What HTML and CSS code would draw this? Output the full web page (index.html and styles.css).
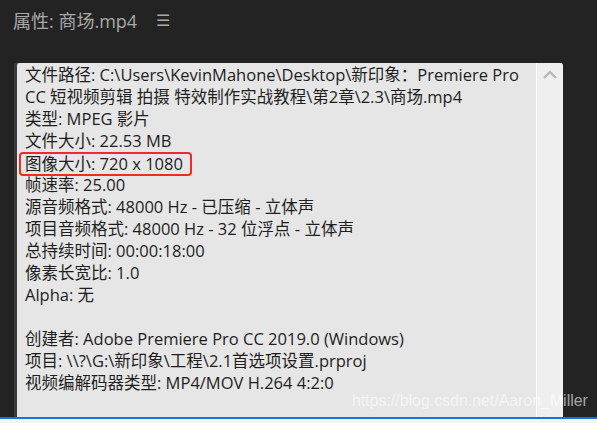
FILE: index.html
```html
<!DOCTYPE html>
<html lang="zh">
<head>
<meta charset="utf-8">
<link rel="stylesheet" href="styles.css">
</head>
<body>
<div class="page">
  <header class="header">
    <span class="title">属性: 商场.mp4</span>
    <span class="menu">☰</span>
  </header>
  <div class="main">
    <div class="gutter"></div>
    <div class="panel">
      <div class="content">
        <div class="line">文件路径: C:\Users\KevinMahone\Desktop\新印象：Premiere Pro</div>
        <div class="line">CC 短视频剪辑 拍摄 特效制作实战教程\第2章\2.3\商场.mp4</div>
        <div class="line">类型: MPEG 影片</div>
        <div class="line">文件大小: 22.53 MB</div>
        <div class="line"><span class="highlight">图像大小: 720 x 1080</span></div>
        <div class="line">帧速率: 25.00</div>
        <div class="line">源音频格式: 48000 Hz - 已压缩 - 立体声</div>
        <div class="line">项目音频格式: 48000 Hz - 32 位浮点 - 立体声</div>
        <div class="line">总持续时间: 00:00:18:00</div>
        <div class="line">像素长宽比: 1.0</div>
        <div class="line">Alpha: 无</div>
        <div class="line"></div>
        <div class="line">创建者: Adobe Premiere Pro CC 2019.0 (Windows)</div>
        <div class="line">项目: \\?\G:\新印象\工程\2.1首选项设置.prproj</div>
        <div class="line">视频编解码器类型: MP4/MOV H.264 4:2:0</div>
      </div>
      <div class="scrollbar">
        <svg class="chevron" width="14" height="9" viewBox="0 0 14 9"><path d="M1 8 L7 2 L13 8" fill="none" stroke="#b9b9b9" stroke-width="2.4"/></svg>
      </div>
    </div>
    <div class="right"></div>
  </div>
  <div class="blueline"></div>
  <div class="bottom"><span class="bottom-text">《》都需设置帮你的操作和功能</span></div>
  <div class="watermark">https://blog.csdn.net/Aaron_Miller</div>
</div>
</body>
</html>
```
FILE: styles.css
```css
html, body {
  margin: 0;
  padding: 0;
  background: #232323;
}
.page {
  position: relative;
  width: 597px;
  height: 423px;
  overflow: hidden;
  background: #232323;
  font-family: "Open Sans", "Noto Sans CJK SC", sans-serif;
}
.header {
  height: 63px;
  box-sizing: border-box;
  padding: 6px 0 0 13px;
  display: flex;
  align-items: flex-start;
  color: #a9a9a9;
}
.title {
  font-size: 18px;
  line-height: 30px;
}
.menu {
  font-family: "DejaVu Sans", sans-serif;
  font-size: 16px;
  line-height: 30px;
  margin-left: 19px;
}
.main {
  display: flex;
  height: 354px;
  flex-shrink: 0;
}
.gutter {
  width: 14px;
  border-right: 3px solid #3a3a3a;
}
.panel {
  width: 546px;
  display: flex;
  background: #e6e6e6;
  border-top-right-radius: 3px;
  border-top-left-radius: 2px;
  overflow: hidden;
}
.content {
  flex: 1;
  padding: 1px 0 0 8px;
  color: #1e1e1e;
  font-size: 16.5px;
  overflow: hidden;
}
.line {
  height: 22px;
  line-height: 22px;
  white-space: nowrap;
}
.highlight {
  display: inline-block;
  line-height: 20px;
  margin-left: -6px;
  padding: 0 7px 0 4px;
  border: 2px solid #ee2a2a;
  border-radius: 4px;
}
.scrollbar {
  width: 27px;
  flex-shrink: 0;
  background: #efefef;
  border-left: 1px solid #ffffff;
  display: flex;
  justify-content: center;
  padding-top: 7px;
  box-sizing: border-box;
}
.chevron {
  display: block;
}
.right {
  flex: 1;
}
.blueline {
  height: 2px;
  background: #1f6fd6;
}
.bottom {
  height: 4px;
  background: #f3f3f3;
  overflow: hidden;
  padding-left: 165px;
}
.bottom-text {
  display: block;
  font-size: 22px;
  line-height: 26px;
  color: #111;
  white-space: nowrap;
  font-family: "Noto Sans CJK SC", sans-serif;
}
.watermark {
  position: absolute;
  left: 352px;
  top: 392px;
  font-family: "Liberation Sans", Arial, sans-serif;
  font-size: 15.9px;
  color: rgba(255, 255, 255, 0.6);
  white-space: nowrap;
}
```
